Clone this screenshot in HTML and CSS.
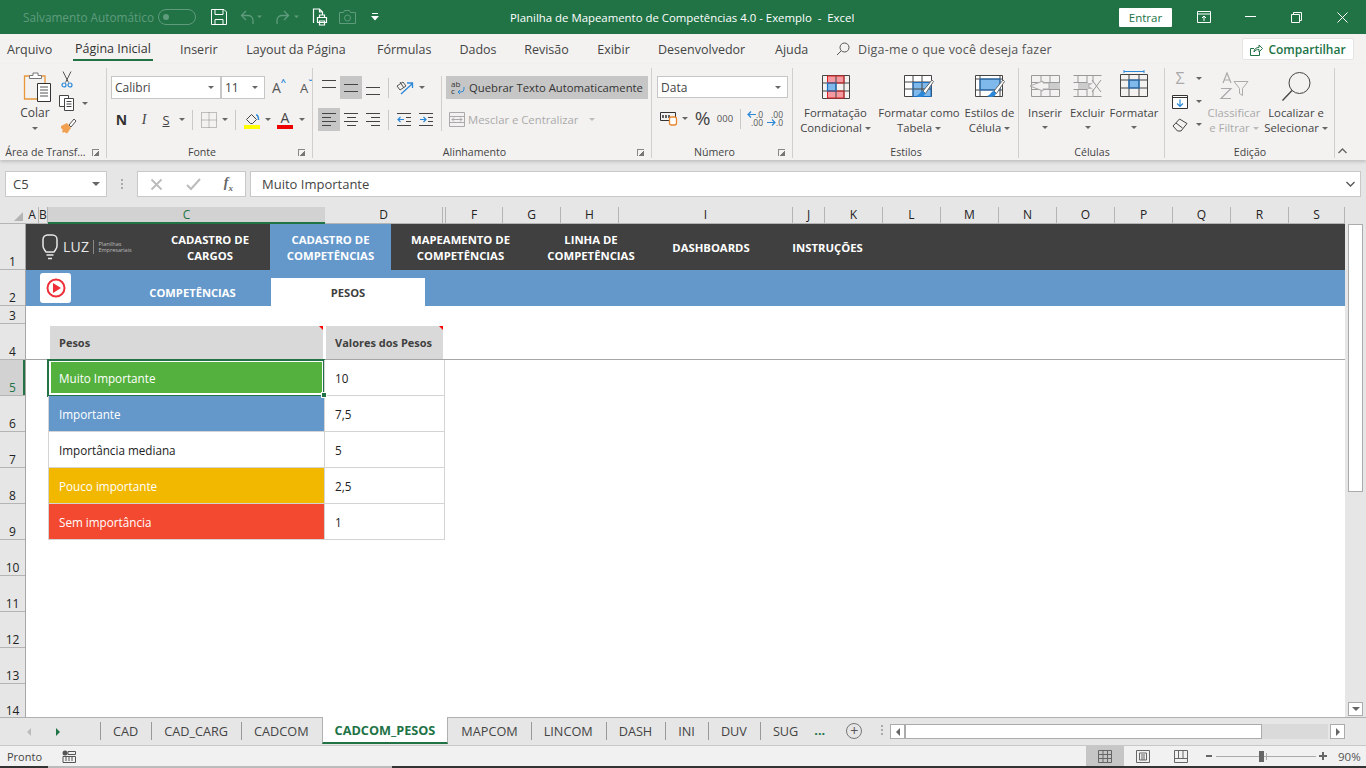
FILE: index.html
```html
<!DOCTYPE html>
<html lang="pt-BR">
<head>
  <meta charset="UTF-8" />
  <title>Planilha de Mapeamento de Competências 4.0 - Exemplo - Excel</title>
  <link rel="stylesheet" href="styles.css">
</head>
<body>
<div class="app">

  <!-- title bar -->
  <header class="titlebar">
    <span class="autosave">Salvamento Automático</span>
    <span class="toggle"><i></i></span>
    <svg class="qa qa-save" width="16" height="16" viewBox="0 0 16 16" fill="none" stroke="#fff"><path d="M.5.500h12.500l2.500 2.500v12.500H.500z"/><path d="M4 .5v5h8v-5M4 15.500v-5h8v5"/></svg>
    <svg class="qa qa-undo" width="22" height="16" viewBox="0 0 22 16" fill="none" stroke="#5f9b7c" stroke-width="1.3"><path d="M6 2L1.500 6.500 6 11M2 6.500h6a5 5 0 0 1 5 4.500v4"/><path d="M17 6.500h5l-2.500 2.500z" fill="#5f9b7c" stroke="none"/></svg>
    <svg class="qa qa-redo" width="26" height="16" viewBox="0 0 26 16" fill="none" stroke="#5f9b7c" stroke-width="1.3"><path d="M10 2l4.500 4.500L10 11M14 6.500H8a5 5 0 0 0-5 4.500v4"/><path d="M20 6.500h5l-2.500 2.500z" fill="#5f9b7c" stroke="none"/></svg>
    <svg class="qa qa-print" width="16" height="18" viewBox="0 0 16 18" fill="none" stroke="#fff" stroke-width="1.2"><path d="M1.500 15V1h6l3 3v3M7.500 1v3h3"/><path d="M5.500 9.500h9v5h-9zM7.500 9.500V7h5v2.500M7.500 13h5v4h-5z" fill="#217346"/></svg>
    <svg class="qa qa-cam" width="17" height="14" viewBox="0 0 17 14" fill="none" stroke="#5f9b7c"><path d="M.5 2.500h4l1-2h5l1 2h5v11H.500z"/><circle cx="8.500" cy="8" r="3"/></svg>
    <svg class="qa qa-more" width="8" height="9" viewBox="0 0 8 9" fill="#fff"><path d="M1 0h6v1H1zM0 3h8L4 7.500z"/></svg>
    <span class="doc-title">Planilha de Mapeamento de Competências 4.0 - Exemplo &nbsp;-&nbsp; Excel</span>
    <span class="signin">Entrar</span>
    <svg class="win win-ribbon" width="14" height="12" viewBox="0 0 14 12" fill="none" stroke="#fff"><path d="M.5.500h13v11H.500zM.5 3h13M7 10V5M5 7l2-2 2 2"/></svg>
    <svg class="win win-min" width="11" height="2" viewBox="0 0 11 2"><path d="M0 .5h11" stroke="#fff"/></svg>
    <svg class="win win-max" width="11" height="11" viewBox="0 0 11 11" fill="none" stroke="#fff"><path d="M.5 2.500h8v8h-8zM2.500 2.500v-2h8v8h-2"/></svg>
    <svg class="win win-close" width="11" height="11" viewBox="0 0 11 11" stroke="#fff"><path d="M.5.500l10 10M10.500.500l-10 10"/></svg>
  </header>

  <!-- ribbon tabs -->
  <nav class="tabs">
    <span>Arquivo</span>
    <span class="tab-on">Página Inicial</span>
    <span>Inserir</span>
    <span>Layout da Página</span>
    <span>Fórmulas</span>
    <span>Dados</span>
    <span>Revisão</span>
    <span>Exibir</span>
    <span>Desenvolvedor</span>
    <span>Ajuda</span>
    <span class="tell">
      <svg width="14" height="14" viewBox="0 0 14 14" fill="none" stroke="#555"><circle cx="8.500" cy="5.500" r="4.500"/><path d="M5 9l-4 4"/></svg>
      Diga-me o que você deseja fazer
    </span>
    <span class="share">
      <svg width="13" height="13" viewBox="0 0 13 13" fill="none" stroke="#217346"><path d="M4 5.500H.5v7h9V9M4 9c0-3 2-4.500 5-4.500V2l3.500 3.500L9 9V6.500C7 6.500 5 7 4 9z"/></svg>
      Compartilhar
    </span>
  </nav>

  <!-- ribbon -->
  <section class="ribbon">
    <div class="group">
      <div class="group-body clip">
        <div class="paste">
          <svg width="30" height="30" viewBox="0 0 30 30" fill="none"><path d="M7 4H1.500v23h16" stroke="#e8963a" stroke-width="1.300"/><path d="M17 4h5v7" stroke="#e8963a" stroke-width="1.300"/><path d="M6.500 6.500V3.500h3.500V1h5v2.500h3.500v3z" fill="#fff" stroke="#777"/><path d="M14.500 11.500h13v18h-13z" fill="#fff" stroke="#333"/><path d="M17 15h8M17 18h8M17 21h8M17 24h8" stroke="#555"/></svg>
          <span>Colar</span>
          <b class="caret"></b>
        </div>
        <div class="clip-tools">
          <svg width="12" height="17" viewBox="0 0 12 17" fill="none" stroke="#555"><path d="M2 .5l5.500 11M10 .5L4.500 11.500"/><circle cx="3" cy="14" r="2" stroke="#2b88d8" stroke-width="1.200"/><circle cx="9" cy="14" r="2" stroke="#2b88d8" stroke-width="1.200"/></svg>
          <span class="copy">
            <svg width="18" height="16" viewBox="0 0 18 16" fill="#fff" stroke="#444"><path d="M.5.500h9v11h-9z"/><path d="M5.500 3.500h9v12h-9z"/><path d="M7.500 6.500h5M7.500 9h5M7.500 11.500h5"/></svg>
            <b class="caret"></b>
          </span>
          <svg width="17" height="16" viewBox="0 0 17 16"><path d="M1 8l6-3 4 5-4 5.500L4 14l-1 1-1-2 1-1-2-2z" fill="#f0a050"/><path d="M9 7l5-6 2 2-5 6z" fill="#fff" stroke="#555"/></svg>
        </div>
      </div>
      <div class="group-label"><span>Área de Transf...</span><i class="launcher"></i></div>
    </div>

    <div class="group">
      <div class="group-body stack">
        <div class="r font-r1">
          <span class="combo">Calibri<b class="caret"></b></span>
          <span class="combo">11<b class="caret"></b></span>
          <span class="grow">A<sup>^</sup></span>
          <span class="shrink">A<sup>ˇ</sup></span>
        </div>
        <div class="r font-r2">
          <span class="t-n">N</span>
          <span class="t-i">I</span>
          <span class="t-s">S</span>
          <b class="caret"></b>
          <i class="sep"></i>
          <svg width="16" height="16" viewBox="0 0 16 16" fill="none" stroke="#888" stroke-dasharray="1 1"><path d="M.5.500h15v15H.500zM8 .5v15M.5 8h15"/></svg>
          <b class="caret"></b>
          <i class="sep"></i>
          <span class="swatch">
            <svg width="15" height="12" viewBox="0 0 15 12" fill="none" stroke="#444"><path d="M1.500 6.500L6.500 1.500l5 5-4 4h-2z"/><path d="M11 2c2 0 2.500 3 2.500 5" stroke="#2b88d8" stroke-width="1.500"/></svg>
            <i class="bar-yellow"></i>
          </span>
          <b class="caret"></b>
          <span class="swatch">
            <span class="fc">A</span>
            <i class="bar-red"></i>
          </span>
          <b class="caret"></b>
        </div>
      </div>
      <div class="group-label"><span>Fonte</span><i class="launcher"></i></div>
    </div>

    <div class="group">
      <div class="group-body align">
        <div class="stack align-left">
          <div class="r align-r1">
            <span class="al al-top"><i></i><i></i></span>
            <span class="al al-mid on"><i></i><i></i></span>
            <span class="al al-bot"><i></i><i></i></span>
            <i class="sep"></i>
            <svg width="19" height="16" viewBox="0 0 19 16" fill="none"><path d="M1 6l6-4 3 4-6 4zM4 2l4 6" stroke="#555"/><path d="M5 14L16 4M11 3h5.500v5" stroke="#2b88d8" stroke-width="1.300"/></svg>
            <b class="caret"></b>
          </div>
          <div class="r align-r2">
            <span class="al al-l on"><i></i><i></i><i></i><i></i></span>
            <span class="al al-c"><i></i><i></i><i></i><i></i></span>
            <span class="al al-r"><i></i><i></i><i></i><i></i></span>
            <i class="sep"></i>
            <svg width="15" height="13" viewBox="0 0 15 13" fill="none" stroke="#444"><path d="M0 .5h14M0 12.500h14M9 4.500h5M9 8.500h5"/><path d="M7 6.500H1M3.500 4L1 6.500 3.500 9" stroke="#2b88d8" stroke-width="1.200"/></svg>
            <svg width="15" height="13" viewBox="0 0 15 13" fill="none" stroke="#444"><path d="M0 .5h14M0 12.500h14M9 4.500h5M9 8.500h5"/><path d="M1 6.500h6M4.500 4L7 6.500 4.500 9" stroke="#2b88d8" stroke-width="1.200"/></svg>
          </div>
        </div>
        <div class="stack align-right">
          <div class="wrap-btn">
            <span class="abc">ab<br>c<svg width="8" height="8" viewBox="0 0 8 8" fill="none" stroke="#2b88d8"><path d="M7 0v2a3 3 0 0 1-3 3H1M3 3L1 5l2 2"/></svg></span>
            <span>Quebrar Texto Automaticamente</span>
          </div>
          <div class="merge-btn">
            <svg width="16" height="15" viewBox="0 0 16 15" fill="none" stroke="#aaa"><path d="M.5.500h15v14H.500zM.5 4.500h15M.5 10.500h15"/><path d="M3 7.500h10M5 5.500l-2 2 2 2M11 5.500l2 2-2 2"/></svg>
            <span>Mesclar e Centralizar</span>
            <b class="caret caret-off"></b>
          </div>
        </div>
      </div>
      <div class="group-label"><span>Alinhamento</span><i class="launcher"></i></div>
    </div>

    <div class="group">
      <div class="group-body stack">
        <span class="combo combo-num">Data<b class="caret"></b></span>
        <div class="r num-r2">
          <svg width="18" height="15" viewBox="0 0 18 15" fill="none"><path d="M.5 1.500h15v8H.500z" stroke="#333"/><path d="M3 4v3M6 4v3M9 4v3" stroke="#333" stroke-width="1.500"/><rect x="9.500" y="6" width="7" height="8" rx="2" fill="#fff" stroke="#e8862e" stroke-width="1.300"/></svg>
          <b class="caret"></b>
          <span class="pct">%</span>
          <span class="mil">000</span>
          <i class="sep"></i>
          <span class="dec">
            <span class="dec-line"><svg width="9" height="7" viewBox="0 0 9 7" fill="none" stroke="#2b88d8" stroke-width="1.200"><path d="M9 3.500H1M4 .5l-3 3 3 3"/></svg>.0</span>
            <span class="dec-line">.00</span>
          </span>
          <span class="dec">
            <span class="dec-line">.00</span>
            <span class="dec-line"><svg width="9" height="7" viewBox="0 0 9 7" fill="none" stroke="#2b88d8" stroke-width="1.200"><path d="M0 3.500h8M5 .5l3 3-3 3"/></svg>.0</span>
          </span>
        </div>
      </div>
      <div class="group-label"><span>Número</span><i class="launcher"></i></div>
    </div>

    <div class="group">
      <div class="group-body bigs">
        <div class="big big-cond">
          <svg width="28" height="24" viewBox="0 0 28 24"><path d="M5 1h17v7H5zM5 16h17v7H5z" fill="#f59aa0"/><path d="M5 8.500h9v7H5z" fill="#7fb8ea"/><path d="M.5.500h27v23H.500zM.5 8h27M.5 16h27M5.500.500v23M14 .500v23M22 .5v23" fill="none" stroke="#444"/><path d="M5.500 1h16.500v7H5.500zM5.500 16h16.500v7H5.500z" fill="none" stroke="#d22"/><path d="M5.500 8h8.500v8H5.500z" fill="none" stroke="#1a6fc0" stroke-width="1.200"/></svg>
          <span>Formatação<br>Condicional<b class="caret inl"></b></span>
        </div>
        <div class="big big-table">
          <svg width="30" height="26" viewBox="0 0 30 26"><path d="M.5.500h27v21H.500z" fill="#fff"/><path d="M9 7.500h18v14H9z" fill="#7fb8ea"/><path d="M.5.500h27v21H.500zM.5 7h27M.5 14h27M9 .5v21M18 .5v21" fill="none" stroke="#444"/><path d="M9 7.500h18v14H9z" fill="none" stroke="#1a6fc0"/><path d="M19 16L28 5l1.500 1.500-8 12z" fill="#fff" stroke="#666"/><path d="M19 16c-3 0-3 4-7 5 4 2 9 1 9-3z" fill="#2b88d8"/></svg>
          <span>Formatar como<br>Tabela<b class="caret inl"></b></span>
        </div>
        <div class="big big-cell">
          <svg width="30" height="26" viewBox="0 0 30 26"><path d="M.5.500h27v21H.500z" fill="#fff"/><path d="M5 4h20v11H5z" fill="#7fb8ea"/><path d="M.5.500h27v21H.500zM.5 4h27M.5 15h27M5 .5v21M25 .5v21" fill="none" stroke="#444"/><path d="M5 4h20v11H5z" fill="none" stroke="#1a6fc0"/><path d="M19 16L28 5l1.500 1.500-8 12z" fill="#fff" stroke="#666"/><path d="M19 16c-3 0-3 4-7 5 4 2 9 1 9-3z" fill="#2b88d8"/></svg>
          <span>Estilos de<br>Célula<b class="caret inl"></b></span>
        </div>
      </div>
      <div class="group-label"><span>Estilos</span></div>
    </div>

    <div class="group">
      <div class="group-body bigs">
        <div class="big big-ins">
          <svg width="32" height="22" viewBox="0 0 32 22" fill="none"><path d="M2.500.500h28v21h-28z" stroke="#999"/><path d="M2.500 7.500h28M2.500 14.500h28M12 .5v21M21 .5v21" stroke="#999"/><path d="M13 8h18v6H13z" fill="#ccc"/><path d="M14 8v-2L1 11l13 5v-2h6V8z" fill="#f3f2f1" stroke="#aaa"/></svg>
          <span>Inserir</span><b class="caret"></b>
        </div>
        <div class="big big-del">
          <svg width="30" height="22" viewBox="0 0 30 22" fill="none" stroke="#999"><path d="M.5.500h28M.5 21.500h28M.5 7.500h14M.5 14.500h14M5 .5v7M14 .5v7M5 14.500v7M14 14.500v7M20 .5v7M20 14.500v7"/><path d="M5 8h10v6H5z" fill="#ccc" stroke="none"/><path d="M15 8h5l-4 3 4 3h-5z" fill="#bbb" stroke="none"/><path d="M19 5l9 12M28 5l-9 12"/></svg>
          <span>Excluir</span><b class="caret"></b>
        </div>
        <div class="big big-fmt">
          <svg width="28" height="27" viewBox="0 0 28 27" fill="none"><path d="M4 1.500h20M4 0v3M24 0v3" stroke="#2b88d8"/><path d="M9 10h10v8H9z" fill="#7fb8ea"/><path d="M.5 4.500h27v22H.500zM.5 10h27M.5 18h27M9 4.500v22M19 4.500v22" stroke="#444"/><path d="M9 10h10v8H9z" stroke="#1a6fc0" stroke-width="1.200"/></svg>
          <span>Formatar</span><b class="caret"></b>
        </div>
      </div>
      <div class="group-label"><span>Células</span></div>
    </div>

    <div class="group group-edit">
      <div class="group-body edit">
        <div class="edit-tools">
          <span class="edit-row">
            <span class="sigma">Σ</span><b class="caret"></b>
          </span>
          <span class="edit-row">
            <svg width="16" height="14" viewBox="0 0 16 14" fill="#fff" stroke="#333"><path d="M.5.500h15v13H.500z"/><path d="M.5 2.500h15" fill="none"/><path d="M8 4.500v7M5 8.500l3 3 3-3" fill="none" stroke="#2b88d8" stroke-width="1.200"/></svg>
            <b class="caret"></b>
          </span>
          <span class="edit-row">
            <svg width="16" height="14" viewBox="0 0 16 14" fill="none" stroke="#444"><path d="M1 8l6.500-7L15 5.500 9 13H5.500zM4 5l6.500 5"/></svg>
            <b class="caret"></b>
          </span>
        </div>
        <div class="big big-sort">
          <svg width="30" height="28" viewBox="0 0 30 28" fill="none" stroke="#aaa"><path d="M4 11L8 1l4 10M5.500 8h5M2 16.500h10L2 26.500h10" stroke-width="1.200"/><path d="M15 9.500h14l-5.500 7v7l-3-2v-5z"/></svg>
          <span class="off">Classificar<br>e Filtrar<b class="caret inl caret-off"></b></span>
        </div>
        <div class="big big-find">
          <svg width="30" height="30" viewBox="0 0 30 30" fill="none" stroke="#444"><circle cx="18.500" cy="11" r="10.500"/><path d="M11 18.500L1.500 28.500" stroke-width="1.300"/></svg>
          <span>Localizar e<br>Selecionar<b class="caret inl"></b></span>
        </div>
      </div>
      <div class="group-label"><span>Edição</span></div>
    </div>

    <div class="collapse">
      <svg width="9" height="6" viewBox="0 0 9 6" fill="none" stroke="#666" stroke-width="1.400"><path d="M.5 5l4-4 4 4"/></svg>
    </div>
  </section>

  <!-- formula bar -->
  <div class="formula">
    <div class="namebox">C5<b class="caret caret-big"></b></div>
    <div class="dots"><i></i><i></i><i></i></div>
    <div class="fx-box">
      <svg width="13" height="13" viewBox="0 0 13 13" stroke="#bbb" stroke-width="1.800"><path d="M1.500 1.500l10 10M11.500 1.500l-10 10"/></svg>
      <svg width="15" height="13" viewBox="0 0 15 13" fill="none" stroke="#bbb" stroke-width="2"><path d="M1 7l4 4 9-10"/></svg>
      <span class="fx">f<sub>x</sub></span>
    </div>
    <div class="fx-input">Muito Importante
      <svg width="9" height="6" viewBox="0 0 9 6" fill="none" stroke="#555" stroke-width="1.300"><path d="M.5 1l4 4 4-4"/></svg>
    </div>
  </div>

  <!-- column headers -->
  <div class="colheads">
    <span class="corner"><i></i></span>
    <span>A</span><span>B</span><span class="col-on">C</span><span>D</span><span></span><span>F</span><span>G</span><span>H</span><span>I</span><span>J</span><span>K</span><span>L</span><span>M</span><span>N</span><span>O</span><span>P</span><span>Q</span><span>R</span><span>S</span>
  </div>

  <div class="grid-area">
    <div class="rowheads">
      <span class="rh-1">1</span>
      <span class="rh-2">2</span>
      <span class="rh-3">3</span>
      <span class="rh-row">4</span>
      <span class="rh-row rh-on">5</span>
      <span class="rh-row">6</span>
      <span class="rh-row">7</span>
      <span class="rh-row">8</span>
      <span class="rh-row">9</span>
      <span class="rh-row">10</span>
      <span class="rh-row">11</span>
      <span class="rh-row">12</span>
      <span class="rh-row">13</span>
      <span class="rh-last">14</span>
    </div>

    <main class="sheet">
      <div class="menu-row">
        <div class="logo">
          <svg width="16" height="26" viewBox="0 0 16 26" fill="none" stroke="#e8e8e8" stroke-width="1.500"><path d="M5.500 1h5A4.500 4.500 0 0 1 15 5.500V12c0 3-2 4-3 6H4c-1-2-3-3-3-6V5.500A4.500 4.500 0 0 1 5.500 1z"/><path d="M4.500 21h7M6 24.500h4"/></svg>
          <span class="logo-name">LUZ</span>
          <i class="logo-sep"></i>
          <span class="logo-sub">Planilhas<br>Empresariais</span>
        </div>
        <a class="m m-cargos">CADASTRO DE<br>CARGOS</a>
        <a class="m m-comp on">CADASTRO DE<br>COMPETÊNCIAS</a>
        <a class="m m-map">MAPEAMENTO DE<br>COMPETÊNCIAS</a>
        <a class="m m-linha">LINHA DE<br>COMPETÊNCIAS</a>
        <a class="m m-dash">DASHBOARDS</a>
        <a class="m m-inst">INSTRUÇÕES</a>
      </div>

      <div class="sub-row">
        <span class="play">
          <svg width="20" height="20" viewBox="0 0 20 20"><circle cx="10" cy="10" r="8.500" fill="none" stroke="#ee2f3a" stroke-width="2"/><path d="M7 5l8 5-8 5z" fill="#ee2f3a"/></svg>
        </span>
        <a class="sub sub-comp">COMPETÊNCIAS</a>
        <a class="sub sub-pesos">PESOS</a>
      </div>

      <div class="blank-row"></div>

      <div class="head-row">
        <div class="th th-a">Pesos</div>
        <div class="th th-b">Valores dos Pesos</div>
      </div>

      <div class="weights">
        <div class="cell c-green selected">Muito Importante<i class="handle"></i></div><div class="cell val">10</div>
        <div class="cell c-blue">Importante</div><div class="cell val">7,5</div>
        <div class="cell c-white">Importância mediana</div><div class="cell val">5</div>
        <div class="cell c-yellow">Pouco importante</div><div class="cell val">2,5</div>
        <div class="cell c-red">Sem importância</div><div class="cell val">1</div>
      </div>
    </main>

    <aside class="vscroll">
      <span class="sb-btn sb-up"><i></i></span>
      <span class="sb-thumb"></span>
      <span class="sb-btn sb-down"><i></i></span>
    </aside>
  </div>

  <!-- sheet tabs -->
  <div class="sheettabs">
    <div class="sheet-nav"><i class="nav-l"></i><i class="nav-r"></i></div>
    <a class="st">CAD</a>
    <a class="st">CAD_CARG</a>
    <a class="st st-pre">CADCOM</a>
    <a class="st st-on">CADCOM_PESOS</a>
    <a class="st st-post">MAPCOM</a>
    <a class="st">LINCOM</a>
    <a class="st">DASH</a>
    <a class="st">INI</a>
    <a class="st">DUV</a>
    <a class="st">SUG</a>
    <span class="st-more">...</span>
    <span class="st-add">+</span>
    <span class="st-dots"><i></i><i></i><i></i></span>
    <div class="hscroll">
      <span class="hb"><i class="h-left"></i></span>
      <span class="h-thumb"></span>
      <span class="h-track"></span>
      <span class="hb"><i class="h-right"></i></span>
    </div>
  </div>

  <!-- status bar -->
  <footer class="status">
    <span class="ready">Pronto</span>
    <svg width="14" height="13" viewBox="0 0 14 13"><circle cx="3" cy="3" r="2.500" fill="#555"/><path d="M1 6.500h12.500v6H1zM6 1.500h7.500v3H6z" fill="none" stroke="#555"/><path d="M3 8h9M3 10h9" stroke="#555" stroke-dasharray="2 1"/></svg>
    <div class="views">
      <span class="view on"><svg width="14" height="13" viewBox="0 0 14 13" fill="none" stroke="#666"><path d="M.5.500h13v12H.500zM.5 4.500h13M.5 8.500h13M5 .5v12M9.500.5v12"/></svg></span>
      <span class="view"><svg width="14" height="13" viewBox="0 0 14 13" fill="none" stroke="#666"><path d="M.5.500h13v12H.500zM3.500 3h7v7h-7zM5 5h4M5 7h4M5 9h4"/></svg></span>
      <span class="view"><svg width="14" height="13" viewBox="0 0 14 13" fill="none" stroke="#666"><path d="M.5.500h13v12H.500zM.5 8.500h13M4.500.5v8M9 .5v8"/></svg></span>
    </div>
    <div class="zoom">
      <i class="z-minus"></i>
      <span class="z-track"><i class="z-mid"></i><i class="z-thumb"></i></span>
      <i class="z-plus"></i>
      <span class="z-val">90%</span>
    </div>
  </footer>
  <div class="edge"></div>
</div>
</body>
</html>
```

FILE: styles.css
```css
* { box-sizing: border-box; }

html, body {
  margin: 0;
  height: 100%;
  overflow: hidden;
}

body {
  font-family: "Open Sans", "Noto Sans", sans-serif;
  font-size: 12px;
  color: #444;
  background: #e6e6e6;
}

i, b { font-style: normal; display: block; }
svg { display: block; flex: none; }

.app {
  width: 1366px;
  height: 768px;
  display: flex;
  flex-direction: column;
}

/* title bar */
.titlebar {
  height: 34px;
  background: #217346;
  display: flex;
  align-items: center;
  color: #fff;
  flex: none;
}

.autosave { margin-left: 23px; width: 135px; color: #5f9b7c; font-size: 11.8px; white-space: nowrap; }

.toggle {
  width: 38px;
  height: 16px;
  border: 1px solid #5f9b7c;
  border-radius: 8px;
  padding: 4px;
}
.toggle i { width: 6px; height: 6px; border-radius: 50%; background: #5f9b7c; }

.qa-save { margin-left: 15px; }
.qa-undo { margin-left: 13px; }
.qa-redo { margin-left: 12px; }
.qa-print { margin-left: 12px; }
.qa-cam { margin-left: 11px; }
.qa-more { margin-left: 15px; }

.doc-title { margin-left: 131px; width: 610px; white-space: nowrap; font-size: 11.4px; }

.signin {
  width: 53px;
  height: 19px;
  margin-left: -1px;
  background: #fff;
  color: #217346;
  font-size: 11.5px;
  line-height: 19px;
  text-align: center;
  border-radius: 1px;
}

.win-ribbon { margin-left: 25px; }
.win-min { margin-left: 34px; }
.win-max { margin-left: 35px; }
.win-close { margin-left: 35px; }

/* ribbon tabs */
.tabs {
  height: 30px;
  flex: none;
  background: #f3f2f1;
  display: grid;
  grid-template-columns: 7px 45px 23px 75px 30px 36px 30px 100px 31px 53px 29px 38px 27px 45px 28px 33px 28px 87px 30px 33px 28px 1fr 124px;
  align-items: center;
  font-size: 12.5px;
  white-space: nowrap;
  color: #444;
}

.tabs > span { text-align: center; }
.tabs > span:nth-child(1) { grid-column: 2; }
.tabs > span:nth-child(2) { grid-column: 4; }
.tabs > span:nth-child(3) { grid-column: 6; }
.tabs > span:nth-child(4) { grid-column: 8; }
.tabs > span:nth-child(5) { grid-column: 10; }
.tabs > span:nth-child(6) { grid-column: 12; }
.tabs > span:nth-child(7) { grid-column: 14; }
.tabs > span:nth-child(8) { grid-column: 16; }
.tabs > span:nth-child(9) { grid-column: 18; }
.tabs > span:nth-child(10) { grid-column: 20; }

.tab-on { position: relative; height: 30px; line-height: 30px; color: #333; }
.tab-on::after {
  content: "";
  position: absolute;
  left: -2px;
  right: -3px;
  top: 25px;
  height: 2px;
  background: #217346;
}

.tabs > .tell {
  grid-column: 22;
  display: flex;
  align-items: center;
  gap: 8px;
  color: #555;
  letter-spacing: .18px;
}

.tabs > .share {
  grid-column: 23;
  width: 112px;
  height: 22px;
  background: #fff;
  border: 1px solid #e4e4e4;
  border-radius: 2px;
  color: #217346;
  font-weight: 600;
  display: flex;
  align-items: center;
  justify-content: center;
  gap: 5px;
  font-size: 12px;
}

/* ribbon */
.ribbon {
  height: 96px;
  flex: none;
  background: #f3f2f1;
  display: grid;
  grid-template-columns: 107px 206px 339px 141px 226px 146px 170px 1fr;
  box-shadow: 0 2px 3px rgba(0,0,0,.16);
  position: relative;
}

.group {
  display: flex;
  flex-direction: column;
  padding-top: 4px;
  position: relative;
}

.group::after {
  content: "";
  position: absolute;
  right: 0;
  top: 4px;
  bottom: 2px;
  width: 1px;
  background: #d0cfce;
}

.group-body { flex: 1; min-height: 0; }

.group-label {
  height: 18px;
  padding-top: 2px;
  display: flex;
  align-items: center;
  font-size: 10.6px;
  color: #444;
  white-space: nowrap;
}
.group-label span { flex: 1; text-align: center; }

.launcher {
  width: 7px;
  height: 7px;
  margin: 0 8px 0 1px;
  border-left: 1px solid #888;
  border-top: 1px solid #888;
  background: linear-gradient(135deg, transparent 55%, #777 55%);
}

.caret {
  width: 0;
  height: 0;
  border-left: 3px solid transparent;
  border-right: 3px solid transparent;
  border-top: 3px solid #666;
}
.caret.inl { display: inline-block; margin-left: 3px; vertical-align: middle; }
.caret-off { border-top-color: #bbb; }
.caret-big { border-left-width: 4px; border-right-width: 4px; border-top-width: 4px; }

.sep { width: 1px; height: 20px; background: #c8c8c8; }

.stack { display: flex; flex-direction: column; }
.r { display: grid; align-items: center; justify-items: center; height: 23px; }

/* clipboard */
.clip { display: flex; padding-top: 4px; }

.paste {
  margin-left: 20px;
  width: 30px;
  display: flex;
  flex-direction: column;
  align-items: center;
  color: #444;
}
.paste svg { align-self: flex-start; margin-left: 3px; }
.paste span { margin-top: 2px; line-height: 18px; }
.paste .caret { margin-top: 5px; }

.clip-tools {
  margin-left: 10px;
  margin-top: -1px;
  display: flex;
  flex-direction: column;
  gap: 7px;
}
.clip-tools > svg:first-child { margin-left: 1px; }
.copy { display: flex; align-items: center; gap: 5px; margin-left: -1px; }

/* font */
.group:nth-child(2) .stack { padding: 8px 0 0 3px; gap: 9px; }

.font-r1 {
  grid-template-columns: 110px 44px 28px 22px;
  justify-items: start;
  margin-left: 1px;
}

.combo {
  height: 23px;
  background: #fff;
  border: 1px solid #c6c6c6;
  display: flex;
  align-items: center;
  justify-content: space-between;
  padding: 0 6px 0 3px;
  font-size: 12px;
  width: 100%;
}

.grow, .shrink { font-size: 14px; color: #555; display: flex; margin-left: 7px; }
.grow sup, .shrink sup { font-size: 9px; line-height: 8px; color: #2b88d8; margin: 0; font-weight: 700; }
.shrink { font-size: 13px; }

.font-r2 { grid-template-columns: 23px 22px 22px 10px 11px 21px 11px 11px 22px 10px 24px 10px; }

.t-n { font-weight: 700; font-size: 14px; color: #333; }
.t-i { font-style: italic; font-size: 14px; font-family: "Liberation Serif", serif; color: #444; }
.t-s { text-decoration: underline; font-size: 13px; color: #444; }

.swatch { display: flex; flex-direction: column; align-items: center; width: 16px; height: 18px; justify-content: flex-end; }
.bar-yellow, .bar-red { width: 16px; height: 4px; }
.bar-yellow { background: #ff0; }
.bar-red { background: #e00; }
.fc { font-size: 14px; line-height: 14px; color: #444; }

/* alignment */
.align { display: flex; padding-top: 8px; padding-left: 5px; }
.align-left { width: 124px; gap: 9px; border-right: 1px solid #d0cfce; height: 55px; }
.align-right { margin-left: 4px; gap: 9px; }

.align-r1 { grid-template-columns: 22px 22px 22px 9px 24px 10px; }
.align-r2 { grid-template-columns: 22px 22px 22px 9px 22px 22px; }

.al {
  width: 22px;
  height: 23px;
  display: flex;
  flex-direction: column;
  gap: 3px;
  padding: 0 4px;
}
.al.on { background: #c6c6c6; }
.al i { height: 1px; background: #444; }

.al-top { justify-content: flex-start; padding-top: 4px; }
.al-mid { justify-content: center; }
.al-bot { justify-content: flex-end; padding-bottom: 4px; }
.al-top, .al-mid, .al-bot { gap: 6px; }

.al-l, .al-c, .al-r { justify-content: center; }
.al-l i:nth-child(even) { width: 9px; }
.al-c i:nth-child(even) { width: 9px; align-self: center; }
.al-r i:nth-child(even) { width: 9px; align-self: flex-end; }

.wrap-btn {
  width: 202px;
  height: 23px;
  background: #c6c6c6;
  display: flex;
  align-items: center;
  gap: 1px;
  padding-left: 5px;
  font-size: 11.3px;
  color: #333;
  white-space: nowrap;
}

.abc { font-size: 8px; line-height: 7px; position: relative; width: 17px; height: 15px; flex: none; }
.abc svg { position: absolute; left: 6px; top: 7px; }

.merge-btn {
  height: 23px;
  display: flex;
  align-items: center;
  padding-left: 3px;
  color: #aaa;
  font-size: 11.3px;
  white-space: nowrap;
}
.merge-btn span { margin-left: 3px; }
.merge-btn .caret { margin-left: 11px; }

/* number */
.group:nth-child(4) .stack { padding: 8px 0 0 5px; gap: 9px; }
.combo-num { width: 131px; height: 22px; flex: none; }
.num-r2 { grid-template-columns: 22px 10px 25px 20px 11px 18px 22px; width: 131px; margin-left: 1px; }
.pct { font-size: 19px; line-height: 19px; color: #444; }
.mil { font-size: 9.5px; color: #555; }
.dec { display: flex; flex-direction: column; font-size: 8.5px; line-height: 8px; color: #555; white-space: nowrap; }
.dec-line { display: flex; align-items: center; justify-content: flex-end; }

/* big buttons */
.bigs { display: flex; padding-top: 6px; }

.big {
  display: flex;
  flex-direction: column;
  align-items: center;
  text-align: center;
  font-size: 11.3px;
  line-height: 15px;
  white-space: nowrap;
  color: #444;
}
.big svg { margin: 1px 0 4px; }
.big .caret { margin-top: 6px; }
.big .caret.inl { margin-top: 0; }

.big-cond { width: 83px; margin-left: 1px; }
.big-cond svg { margin-bottom: 6px; }
.big-table { width: 84px; }
.big-cell { width: 57px; }

.big-ins { width: 50px; margin-left: 1px; }
.big-del { width: 35px; }
.big-fmt { width: 48px; margin-left: 5px; }
.big-ins svg, .big-del svg { margin: 1px 0 8px; }
.big-fmt svg { margin: -4px 0 8px; }

/* editing */
.edit { display: flex; padding: 3px 0 0 7px; }
.edit-tools { width: 32px; display: flex; flex-direction: column; gap: 8px; flex: none; }
.edit-row { display: flex; align-items: center; gap: 8px; height: 15px; }
.sigma { width: 16px; font-size: 16px; line-height: 15px; color: #aaa; text-align: center; }
.big-sort { width: 60px; margin-top: 1px; }
.big-sort svg { margin: 0 0 5px; }
.off { color: #aaa; }
.big-find { width: 64px; }
.big-find svg { margin: 1px 0 3px; }

.collapse { display: flex; justify-content: center; align-items: flex-end; padding: 0 17px 6px 0; }

/* formula bar */
.formula {
  height: 47px;
  flex: none;
  display: flex;
  align-items: flex-start;
  padding: 11px 0 0 5px;
  font-size: 13px;
}

.namebox, .fx-box, .fx-input {
  height: 26px;
  background: #fff;
  border: 1px solid #c8c8c8;
  display: flex;
  align-items: center;
}

.namebox { width: 102px; padding: 0 6px 0 7px; justify-content: space-between; color: #444; }
.dots { width: 30px; height: 26px; display: flex; flex-direction: column; align-items: center; justify-content: center; gap: 2px; }
.dots i, .st-dots i { width: 2px; height: 2px; background: #aaa; }
.fx-box { width: 109px; justify-content: space-between; padding: 0 12px 0 12px; }
.fx { font-family: "Liberation Serif", serif; font-style: italic; font-size: 14px; color: #666; font-weight: 700; }
.fx sub { font-size: 9px; }
.fx-input { width: 1111px; margin-left: 4px; padding: 0 5px 0 11px; justify-content: space-between; color: #444; }

/* column headers */
.colheads {
  height: 17px;
  flex: none;
  display: grid;
  grid-template-columns: 26px 13px 9px 277px 118px 3px 57px 58px 58px 174px 32px 58px 58px 58px 58px 58px 58px 58px 58px 56px;
  font-size: 12px;
  color: #222;
}

.colheads span {
  text-align: center;
  line-height: 15px;
  border-right: 1px solid #b4b4b4;
  border-bottom: 1px solid #b4b4b4;
  overflow: hidden;
}

.colheads .corner { border-right: 0; position: relative; }
.corner i {
  position: absolute;
  right: 3px;
  bottom: 2px;
  width: 0;
  height: 0;
  border-left: 9px solid transparent;
  border-bottom: 9px solid #b4b4b4;
}

.colheads .col-on { background: #d2d2d2; color: #217346; border-right: 0; border-bottom: 2px solid #217346; }

/* sheet */
.grid-area {
  height: 493px;
  flex: none;
  display: flex;
  overflow: hidden;
}

.rowheads {
  width: 26px;
  flex: none;
  display: flex;
  flex-direction: column;
  border-right: 1px solid #a6a6a6;
  font-size: 12px;
  color: #222;
}

.rowheads span {
  flex: none;
  display: flex;
  align-items: flex-end;
  justify-content: center;
  border-bottom: 1px solid #b4b4b4;
  line-height: 15px;
}

.rh-1 { height: 46px; }
.rh-2 { height: 36px; }
.rh-3 { height: 18px; }
.rh-row { height: 36px; }
.rowheads .rh-last { height: 33px; border-bottom: 0; line-height: 12px; }
.rowheads .rh-on { background: #d2d2d2; color: #217346; box-shadow: inset -2px 0 0 #217346; }

.sheet { width: 1319px; flex: none; background: #fff; overflow: hidden; }

.menu-row {
  height: 46px;
  background: #404040;
  color: #fff;
  display: flex;
  align-items: center;
  font-size: 11.3px;
  font-weight: 700;
  line-height: 16px;
  text-align: center;
}

.logo {
  width: 124px;
  height: 46px;
  display: flex;
  align-items: center;
  padding-left: 16px;
  font-weight: 400;
  color: #e8e8e8;
}
.logo-name { font-size: 14px; margin-left: 5px; letter-spacing: .3px; }
.logo-sep { width: 1px; height: 14px; background: #888; margin: 0 4px; }
.logo-sub { font-size: 5.5px; line-height: 6px; text-align: left; color: #bbb; }

.m { display: flex; align-items: center; justify-content: center; height: 46px; white-space: nowrap; padding-top: 1px; }
.m.on { background: #6498cb; }
.m-cargos { width: 120px; }
.m-comp { width: 121px; }
.m-map { width: 139px; }
.m-linha { width: 122px; }
.m-dash { width: 118px; }
.m-inst { width: 115px; }

.sub-row {
  height: 36px;
  background: #6498cb;
  display: flex;
  align-items: flex-end;
  font-size: 11.2px;
  font-weight: 700;
  color: #fff;
  position: relative;
}

.play {
  position: absolute;
  left: 14px;
  top: 3px;
  width: 31px;
  height: 30px;
  background: #fff;
  border-radius: 3px;
  display: flex;
  align-items: center;
  justify-content: center;
}

.sub { height: 28px; display: flex; align-items: center; justify-content: center; }
.sub-comp { width: 245px; padding-left: 88px; }
.sub-pesos { width: 154px; background: #fff; color: #404040; margin-left: 0; }

.blank-row { height: 18px; }

.head-row {
  height: 36px;
  display: flex;
  padding: 2px 0 0 24px;
  gap: 3px;
  border-bottom: 1px solid #a6a6a6;
  font-weight: 700;
  font-size: 11px;
  color: #404040;
}

.th {
  background: #d9d9d9;
  display: flex;
  align-items: center;
  padding-left: 9px;
  position: relative;
}
.th::after {
  content: "";
  position: absolute;
  right: 0;
  top: 0;
  border-left: 4px solid transparent;
  border-top: 4px solid #f00;
}
.th-a { width: 273px; }
.th-b { width: 117px; white-space: nowrap; }

.weights {
  width: 397px;
  margin-left: 22px;
  display: grid;
  grid-template-columns: 276px 121px;
  grid-auto-rows: 36px;
  font-size: 11.7px;
}

.cell {
  display: flex;
  align-items: center;
  padding-left: 10px;
  border-left: 1px solid #d4d4d4;
  border-bottom: 1px solid #d4d4d4;
  position: relative;
}

.val { color: #222; border-right: 1px solid #d4d4d4; }

.c-green { background: #54b13d; color: #fff; }
.c-blue { background: #6498cb; color: #fff; border-color: #d4d4d4; }
.c-white { color: #222; }
.c-yellow { background: #f2b800; color: #fff; }
.c-red { background: #f34930; color: #fff; }

.selected {
  outline: 2px solid #217346;
  outline-offset: -1px;
  box-shadow: inset 0 0 0 2px #fff;
  border-color: transparent;
}

.handle {
  position: absolute;
  right: -3px;
  bottom: -3px;
  width: 6px;
  height: 6px;
  background: #217346;
  border: 1px solid #fff;
  z-index: 2;
}

/* scrollbars */
.vscroll {
  width: 21px;
  flex: none;
  display: flex;
  flex-direction: column;
  align-items: center;
  padding: 0 0 1px;
  position: relative;
}

.sb-btn {
  width: 15px;
  height: 14px;
  background: #fff;
  border: 1px solid #ababab;
  display: flex;
  align-items: center;
  justify-content: center;
}
.sb-up { position: absolute; top: -15px; left: 3px; }
.sb-up i { border-left: 4px solid transparent; border-right: 4px solid transparent; border-bottom: 4px solid #666; }
.sb-down { margin-top: auto; }
.sb-down i { border-left: 4px solid transparent; border-right: 4px solid transparent; border-top: 4px solid #666; }

.sb-thumb {
  width: 15px;
  height: 268px;
  background: #fff;
  border: 1px solid #ababab;
}

/* sheet tabs */
.sheettabs {
  height: 28px;
  flex: none;
  display: flex;
  align-items: stretch;
  background: #e6e6e6;
  border-top: 1px solid #b0b0b0;
  font-size: 12.7px;
  color: #444;
  white-space: nowrap;
  position: relative;
}

.sheet-nav { width: 100px; display: flex; align-items: center; padding-left: 27px; gap: 25px; }
.nav-l { border-top: 4px solid transparent; border-bottom: 4px solid transparent; border-right: 4px solid #bbb; }
.nav-r { border-top: 4px solid transparent; border-bottom: 4px solid transparent; border-left: 4px solid #217346; }

.st {
  display: flex;
  align-items: center;
  padding: 0 13px;
  position: relative;
  height: 26px;
}
.st::before {
  content: "";
  position: absolute;
  left: 0;
  top: 4px;
  bottom: 4px;
  width: 1px;
  background: #999;
}

.st-on {
  background: #fff;
  color: #217346;
  font-weight: 700;
  height: 27px;
  margin-top: -1px;
  padding: 0 12px;
  border-bottom: 2px solid #217346;
  border-left: 1px solid #b0b0b0;
  border-right: 1px solid #b0b0b0;
}
.st-on::before, .st-post::before { display: none; }

.st-more { margin-left: 3px; padding-top: 1px; font-weight: 700; color: #217346; width: 22px; line-height: 22px; }

.st-add {
  width: 16px;
  height: 16px;
  margin: 5px 0 0 10px;
  border: 1px solid #777;
  border-radius: 50%;
  text-align: center;
  line-height: 13px;
  font-size: 14px;
  color: #555;
}

.st-dots { display: flex; flex-direction: column; align-items: center; justify-content: center; gap: 2px; width: 12px; margin-left: 14px; height: 24px; }

.hscroll {
  position: absolute;
  left: 890px;
  top: 6px;
  width: 455px;
  height: 15px;
  display: flex;
}

.hb {
  width: 15px;
  height: 15px;
  flex: none;
  background: #fff;
  border: 1px solid #ababab;
  display: flex;
  align-items: center;
  justify-content: center;
}
.h-left { border-top: 4px solid transparent; border-bottom: 4px solid transparent; border-right: 4px solid #666; }
.h-right { border-top: 4px solid transparent; border-bottom: 4px solid transparent; border-left: 4px solid #666; }
.h-thumb { width: 357px; background: #fff; border: 1px solid #ababab; }
.h-track { width: 66px; background: #dadada; margin-right: 2px; }

/* status bar */
.status {
  height: 21px;
  flex: none;
  background: #f1f1f1;
  border-top: 1px solid #c8c8c8;
  display: flex;
  align-items: center;
  font-size: 11px;
  color: #444;
}
.ready { margin-left: 7px; width: 55px; }

.views { display: flex; margin-left: 1010px; height: 20px; }
.view { width: 38px; display: flex; align-items: center; justify-content: center; }
.view.on { background: #c6c6c6; }

.zoom { display: flex; align-items: center; margin-left: 6px; }
.z-minus { width: 6px; height: 2px; background: #666; }
.z-track { width: 100px; height: 1px; background: #aaa; margin: 0 3px 0 4px; position: relative; }
.z-mid { position: absolute; left: 50px; top: -3px; width: 1px; height: 7px; background: #aaa; }
.z-thumb { position: absolute; left: 43px; top: -5px; width: 5px; height: 11px; background: #666; }
.z-plus { width: 8px; height: 8px; background: linear-gradient(#666,#666) center/8px 2px no-repeat, linear-gradient(#666,#666) center/2px 8px no-repeat; }
.z-val { margin-left: 11px; color: #555; font-size: 11.5px; }

.edge { height: 2px; flex: none; background: linear-gradient(to right, #333 48px, #bbb 48px, #bbb 392px, #333 392px); }
```
